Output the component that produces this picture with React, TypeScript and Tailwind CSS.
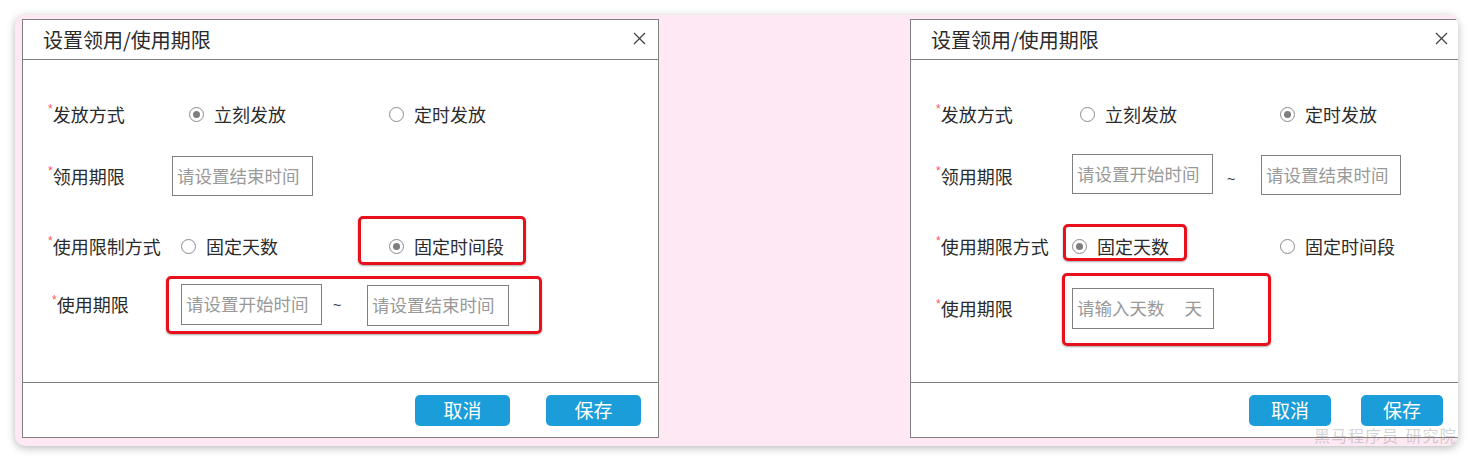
import React from "react";

function Radio({ checked }: { checked?: boolean }) {
  return (
    <span className="flex h-[15px] w-[15px] shrink-0 items-center justify-center rounded-full border border-[#8a8a8a] bg-white">
      {checked && <span className="h-[7px] w-[7px] rounded-full bg-[#7d7d7d]" />}
    </span>
  );
}

function Label({ text, width, offset = "" }: { text: string; width: string; offset?: string }) {
  return (
    <span className={`flex shrink-0 items-center text-[18px] text-[#2b2b2b] ${width} ${offset}`}>
      <span className="relative -top-[5px] font-['Liberation_Sans',sans-serif] text-[12px] leading-none text-[#f05a5a]">*</span>
      {text}
    </span>
  );
}

function Option({ text, checked, width = "" }: { text: string; checked?: boolean; width?: string }) {
  return (
    <span className={`flex shrink-0 items-center gap-[10px] text-[18px] text-[#2b2b2b] ${width}`}>
      <Radio checked={checked} />
      {text}
    </span>
  );
}

function Field({ text, width, height = "h-[40px]", children }: { text?: string; width: string; height?: string; children?: React.ReactNode }) {
  return (
    <span className={`flex shrink-0 items-center border border-[#808080] bg-white pl-[4px] text-[17.5px] text-[#999] ${width} ${height}`}>
      {text}
      {children}
    </span>
  );
}

function Tilde() {
  return <span className="w-[10px] font-['Liberation_Sans',sans-serif] text-[14px] text-[#333]">~</span>;
}

// red annotation box drawn over the screenshot
function Mark({ box }: { box: string }) {
  return <span className={`pointer-events-none absolute rounded-[5px] border-[3px] border-[#e8101c] shadow-[0_1px_2px_rgba(0,0,0,0.35)] ${box}`} />;
}

function Dialog({ width, gap, children }: { width: string; gap: string; children: React.ReactNode }) {
  return (
    <div className={`flex h-[419px] shrink-0 flex-col border border-[#7f7f7f] bg-white ${width}`}>
      <div className="flex h-[40px] items-center justify-between border-b border-[#7f7f7f] pl-[20px] pr-[12px]">
        <span className="text-[20px] text-[#2b2b2b]">设置领用/使用期限</span>
        <svg width="13" height="13" viewBox="0 0 13 13" className="mb-[2px]">
          <path d="M1 1 L12 12 M12 1 L1 12" stroke="#444" strokeWidth="1.3" />
        </svg>
      </div>
      <div className="h-[322px] pl-[25px] pt-[34px]">{children}</div>
      <div className={`flex flex-1 items-start justify-end border-t border-[#7f7f7f] pr-[17px] pt-[12px] ${gap}`}>
        <button className="h-[31px] w-[var(--bw)] rounded-[5px] bg-[#1a9dd8] text-[19px] text-white">取消</button>
        <button className="h-[31px] w-[var(--bw)] rounded-[5px] bg-[#1a9dd8] text-[19px] text-white">保存</button>
      </div>
    </div>
  );
}

export default function App() {
  return (
    <div className="h-[463px] w-[1473px] bg-white pl-[15px] pt-[15px] font-['Noto_Sans_CJK_SC','Liberation_Sans',sans-serif]">
      <div className="relative flex h-[431px] w-[1443px] gap-[251px] overflow-hidden rounded-[10px] bg-[#fde8f3] pl-[7px] pt-[4px] shadow-[0_2px_9px_rgba(0,0,0,0.28)]">
        {/* left: fixed time range */}
        <div className="[--bw:95px]">
          <Dialog width="w-[637px]" gap="gap-[36px]">
            <div className="flex h-[40px] items-center">
              <Label text="发放方式" width="w-[141px]" />
              <Option text="立刻发放" checked width="w-[200px]" />
              <Option text="定时发放" />
            </div>
            <div className="mt-[22px] flex h-[40px] items-center">
              <Label text="领用期限" width="w-[124px]" />
              <Field text="请设置结束时间" width="w-[141px]" />
            </div>
            <div className="mt-[30px] flex h-[40px] items-center">
              <Label text="使用限制方式" width="w-[133px]" />
              <Option text="固定天数" width="w-[208px]" />
              <span className="relative flex h-[40px] items-center">
                <Option text="固定时间段" checked />
                <Mark box="left-[-31px] top-[-10px] h-[49px] w-[168px]" />
              </span>
            </div>
            <div className="mt-[18px] flex h-[41px] items-center">
              <Label text="使用期限" width="w-[129px]" offset="ml-[4px]" />
              <span className="relative flex h-[41px] items-center">
                <Field text="请设置开始时间" width="w-[141px]" height="h-[41px]" />
                <span className="ml-[11px] mt-[2px] flex"><Tilde /></span>
                <span className="ml-[24px] mt-[2px] flex">
                  <Field text="请设置结束时间" width="w-[142px]" height="h-[41px]" />
                </span>
                <Mark box="left-[-15px] top-[-8px] h-[58px] w-[376px]" />
              </span>
            </div>
          </Dialog>
        </div>

        {/* right: fixed days */}
        <div className="[--bw:82px]">
          <Dialog width="w-[551px]" gap="gap-[30px]">
            <div className="flex h-[40px] items-center">
              <Label text="发放方式" width="w-[144px]" />
              <Option text="立刻发放" width="w-[200px]" />
              <Option text="定时发放" checked />
            </div>
            <div className="mt-[20px] flex h-[40px] items-start">
              <Label text="领用期限" width="w-[136px]" offset="h-[40px] mt-[2px]" />
              <Field text="请设置开始时间" width="w-[141px]" />
              <span className="ml-[14px] mt-[15px] flex"><Tilde /></span>
              <span className="ml-[24px] mt-[1px] flex">
                <Field text="请设置结束时间" width="w-[140px]" />
              </span>
            </div>
            <div className="mt-[32px] flex h-[40px] items-center">
              <Label text="使用期限方式" width="w-[136px]" />
              <span className="relative flex h-[40px] w-[208px] shrink-0 items-center">
                <Option text="固定天数" checked />
                <Mark box="left-[-9px] top-[-2px] h-[37px] w-[124px]" />
              </span>
              <Option text="固定时间段" />
            </div>
            <div className="mt-[22px] flex h-[41px] items-center">
              <Label text="使用期限" width="w-[136px]" />
              <span className="relative flex">
                <Field width="w-[142px]" height="h-[41px]">
                  <span>请输入天数</span>
                  <span className="ml-[20px]">天</span>
                </Field>
                <Mark box="left-[-10px] top-[-15px] h-[73px] w-[209px]" />
              </span>
            </div>
          </Dialog>
        </div>

        <span className="pointer-events-none absolute left-[1299px] top-[412px] whitespace-nowrap text-[16px] leading-[17px] tracking-[1px] text-[rgba(140,140,140,0.4)]">
          黑马程序员-研究院
        </span>
      </div>
    </div>
  );
}
